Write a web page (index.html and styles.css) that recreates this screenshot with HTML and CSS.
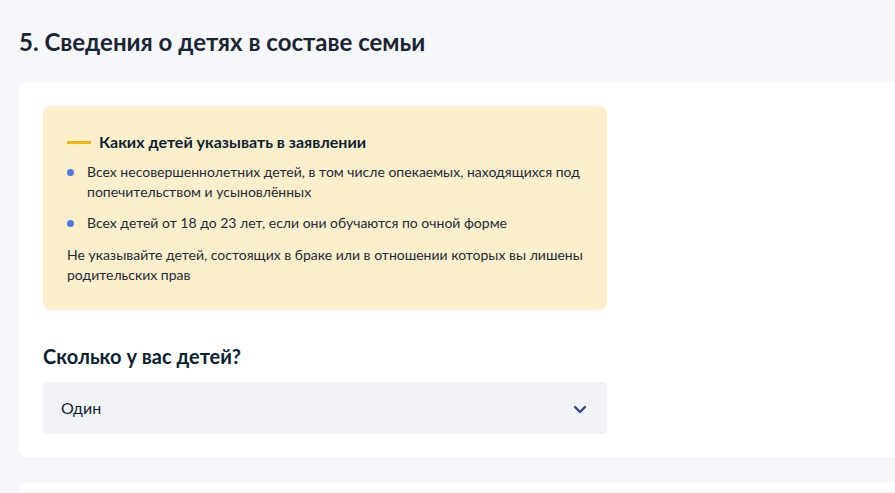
FILE: index.html
```html
<!DOCTYPE html>
<html lang="ru">

<head>
  <meta charset="UTF-8">
  <meta name="viewport" content="width=device-width, initial-scale=1.0">
  <title>Сведения о детях</title>
  <link rel="stylesheet" href="styles.css">
</head>

<body>
  <div class="page">
    <h1 class="step-title">5. Сведения о детях в составе семьи</h1>

    <div class="card">
      <div class="hint">
        <div class="hint-title"><span class="hint-dash"></span>Каких детей указывать в заявлении</div>
        <ul class="hint-list">
          <li>Всех несовершеннолетних детей, в том числе опекаемых, находящихся под попечительством и усыновлённых</li>
          <li>Всех детей от 18 до 23 лет, если они обучаются по очной форме</li>
        </ul>
        <p class="hint-note">Не указывайте детей, состоящих в браке или в отношении которых вы лишены родительских прав</p>
      </div>

      <h2 class="question">Сколько у вас детей?</h2>
      <div class="select">
        <span>Один</span>
        <svg class="chevron" width="14" height="9" viewBox="0 0 14 9">
          <path d="M2 2l5 5 5-5" fill="none" stroke="#2b4a8f" stroke-width="2.4" stroke-linecap="round" stroke-linejoin="round" />
        </svg>
      </div>
    </div>

    <div class="card card-next"></div>
  </div>
</body>

</html>
```

FILE: styles.css
```css
html,
body {
  margin: 0;
  height: 100%;
  overflow: hidden;
}

body {
  background-color: #f6f7fb;
  font-family: Lato, "Noto Sans", sans-serif;
  color: #0b1f33;
}

.page {
  padding-left: 19px;
}

.step-title {
  margin: 28px 0 26px;
  font-size: 24px;
  line-height: 28px;
  font-weight: 700;
  color: #1a2533;
}

.card {
  background-color: #fff;
  border-radius: 8px;
  margin-right: -30px;
  padding: 24px 24px 23px;
}

.card-next {
  margin-top: 26px;
  height: 8px;
  padding: 0;
}

.hint {
  width: 564px;
  box-sizing: border-box;
  background-color: #fdefcc;
  border-radius: 8px;
  padding: 26px 24px 25px;
}

.hint-title {
  display: flex;
  align-items: center;
  font-size: 16px;
  line-height: 20px;
  font-weight: 700;
  color: #0b1f33;
}

.hint-dash {
  width: 24px;
  height: 3px;
  background-color: #f5b50a;
  margin-right: 8px;
}

.hint-list {
  list-style: none;
  margin: 10px 0 0;
  padding: 0;
}

.hint-list li {
  position: relative;
  padding-left: 20px;
  margin-bottom: 11px;
  font-size: 14px;
  line-height: 20px;
  color: #1c2a38;
}

.hint-list li::before {
  content: "";
  position: absolute;
  left: 0;
  top: 7px;
  width: 7px;
  height: 7px;
  border-radius: 50%;
  background-color: #4d7be0;
}

.hint-note {
  margin: 12px 0 0;
  font-size: 14px;
  line-height: 20px;
  color: #1c2a38;
}

.question {
  margin: 34px 0 14px;
  font-size: 20px;
  line-height: 24px;
  font-weight: 700;
  color: #0b1f33;
}

.select {
  width: 564px;
  height: 52px;
  box-sizing: border-box;
  display: flex;
  align-items: center;
  justify-content: space-between;
  padding: 0 20px 2px 18px;
  background-color: #f1f3f7;
  border-radius: 4px;
  font-size: 16px;
  color: #0b1f33;
}

.chevron {
  margin-top: 5px;
}
```
